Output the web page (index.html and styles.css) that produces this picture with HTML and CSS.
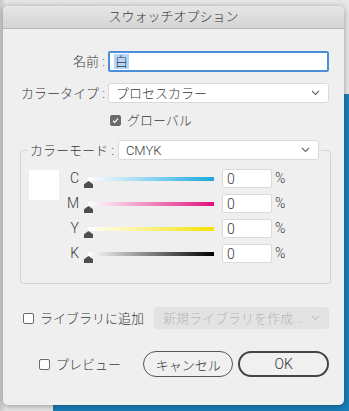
FILE: index.html
```html
<!DOCTYPE html>
<html lang="ja">
<head>
    <meta charset="UTF-8">
    <meta name="viewport" content="width=device-width, initial-scale=1.0">
    <title>スウォッチオプション</title>
    <link rel="stylesheet" href="styles.css">
</head>
<body>
    <div class="desktop">
        <!-- window behind the dialog -->
        <div class="back-window"></div>

        <div class="dialog">
            <div class="title-bar">スウォッチオプション</div>

            <div class="dialog-body">
                <div class="form-row">
                    <label class="row-label" for="swatchName">名前 :</label>
                    <div class="text-field focused" id="swatchName"><span class="selected-text">白</span></div>
                </div>

                <div class="form-row row-type">
                    <label class="row-label">カラータイプ :</label>
                    <div class="select-box">
                        <span>プロセスカラー</span>
                        <svg class="chevron" width="9" height="6" viewBox="0 0 9 6"><polyline points="1,1 4.5,4.5 8,1" fill="none" stroke="#666" stroke-width="1.1"/></svg>
                    </div>
                </div>

                <div class="check-row global-row">
                    <span class="checkbox checked">
                        <svg width="11" height="11" viewBox="0 0 11 11"><polyline points="2.5,5.7 4.6,7.8 8.6,3.2" fill="none" stroke="#fff" stroke-width="1.6"/></svg>
                    </span>
                    <span>グローバル</span>
                </div>

                <fieldset class="color-group">
                    <legend class="group-legend">
                        <span class="legend-label">カラーモード :</span>
                        <span class="select-box mode-select">
                            <span>CMYK</span>
                            <svg class="chevron" width="9" height="6" viewBox="0 0 9 6"><polyline points="1,1 4.5,4.5 8,1" fill="none" stroke="#666" stroke-width="1.1"/></svg>
                        </span>
                    </legend>

                    <div class="mixer">
                        <div class="swatch"></div>
                        <div class="channels">
                            <div class="channel">
                                <span class="channel-name">C</span>
                                <div class="slider"><div class="track track-c"></div><div class="thumb"></div></div>
                                <div class="num-field">0</div>
                                <span class="unit">%</span>
                            </div>
                            <div class="channel">
                                <span class="channel-name">M</span>
                                <div class="slider"><div class="track track-m"></div><div class="thumb"></div></div>
                                <div class="num-field">0</div>
                                <span class="unit">%</span>
                            </div>
                            <div class="channel">
                                <span class="channel-name">Y</span>
                                <div class="slider"><div class="track track-y"></div><div class="thumb"></div></div>
                                <div class="num-field">0</div>
                                <span class="unit">%</span>
                            </div>
                            <div class="channel">
                                <span class="channel-name">K</span>
                                <div class="slider"><div class="track track-k"></div><div class="thumb"></div></div>
                                <div class="num-field">0</div>
                                <span class="unit">%</span>
                            </div>
                        </div>
                    </div>
                </fieldset>

                <div class="library-row">
                    <div class="check-row">
                        <span class="checkbox"></span>
                        <span>ライブラリに追加</span>
                    </div>
                    <div class="select-box disabled">
                        <span>新規ライブラリを作成...</span>
                        <svg class="chevron" width="9" height="6" viewBox="0 0 9 6"><polyline points="1,1 4.5,4.5 8,1" fill="none" stroke="#c4c4c4" stroke-width="1.1"/></svg>
                    </div>
                </div>

                <div class="button-row">
                    <div class="check-row preview">
                        <span class="checkbox"></span>
                        <span>プレビュー</span>
                    </div>
                    <button type="button" class="btn">キャンセル</button>
                    <button type="button" class="btn btn-default">OK</button>
                </div>
            </div>
        </div>
    </div>
</body>
</html>
```

FILE: styles.css
```css
body {
    margin: 0;
    font-family: Roboto, 'Noto Sans CJK JP', sans-serif;
    font-size: 13px;
    font-weight: 300;
    line-height: 17px;
    color: #3a3a3a;
    background-color: #e4e4e4;
}

.desktop {
    position: relative;
    width: 349px;
    height: 411px;
    overflow: hidden;
    background: linear-gradient(90deg, #c9c9c9 0, #e6e6e6 6px, #e8e8e8 100%);
}

.back-window {
    position: absolute;
    left: 53px;
    top: 94px;
    right: 0;
    bottom: 0;
    background-color: #1b7db9;
}

.dialog {
    position: relative;
    margin: 6px 0 0 3px;
    width: 341px;
    height: 399px;
    background-color: #efefef;
    border-radius: 5px;
    box-shadow: 0 1px 6px rgba(0, 0, 0, 0.35);
    overflow: hidden;
}

.title-bar {
    height: 22px;
    line-height: 22px;
    text-align: center;
    font-size: 13px;
    color: #3a3a3a;
    background: linear-gradient(#e6e6e6, #d4d4d4);
    border-bottom: 1px solid #b9b9b9;
}

.dialog-body {
    padding: 22px 15px 0 17px;
}

.form-row {
    display: flex;
    align-items: center;
}

.row-label {
    width: 85px;
    text-align: right;
    margin-right: 3px;
    white-space: nowrap;
}

.text-field {
    flex: 1;
    height: 17px;
    line-height: 17px;
    padding: 0 5px;
    background-color: #fff;
    border: 1px solid #c9c9c9;
}

.text-field.focused {
    border: 2px solid #4a8fd8;
    border-radius: 2px;
    height: 17px;
    padding: 0 4px;
}

.selected-text {
    background-color: #b4d5fc;
    padding: 0 1px;
}

.row-type {
    margin-top: 11px;
}

.select-box {
    flex: 1;
    display: flex;
    align-items: center;
    justify-content: space-between;
    height: 18px;
    padding: 0 8px 0 7px;
    background-color: #fff;
    border: 1px solid #d9d9d9;
    border-radius: 3px;
}

.chevron {
    display: block;
}

.check-row {
    display: flex;
    align-items: center;
    white-space: nowrap;
}

.checkbox {
    display: inline-flex;
    align-items: center;
    justify-content: center;
    width: 11px;
    height: 11px;
    margin-right: 6px;
    border: 1px solid #6a6a6a;
    border-radius: 2px;
    background-color: #fff;
    box-sizing: border-box;
}

.checkbox.checked {
    background-color: #6b6b6b;
    border-color: #6b6b6b;
}

.global-row {
    margin: 9px 0 0 90px;
}

.color-group {
    margin: 11px 0 0 0;
    padding: 9px 9px 20px 8px;
    border: 1px solid #d4d4d4;
    border-radius: 3px;
}

.group-legend {
    display: flex;
    align-items: center;
    padding: 0 2px;
    margin-left: -1px;
}

.legend-label {
    margin-right: 4px;
    white-space: nowrap;
}

.mode-select {
    width: 184px;
    flex: none;
}

.mixer {
    display: flex;
    align-items: flex-start;
}

.swatch {
    width: 30px;
    height: 30px;
    background-color: #fff;
    margin-top: 1px;
}

.channels {
    margin-left: 6px;
}

.channel {
    display: flex;
    align-items: center;
    height: 19px;
    margin-bottom: 6px;
    font-size: 14px;
}

.channel:last-child {
    margin-bottom: 0;
}

.channel-name {
    width: 14px;
    text-align: right;
}

.slider {
    position: relative;
    width: 130px;
    height: 19px;
    margin-left: 5px;
}

.track {
    position: absolute;
    left: 4px;
    right: 0;
    top: 8px;
    height: 4px;
}

.track-c { background: linear-gradient(90deg, #fff, #19a8df); }
.track-m { background: linear-gradient(90deg, #fff, #e0117e); }
.track-y { background: linear-gradient(90deg, #fff, #f4e200); }
.track-k { background: linear-gradient(90deg, #fff, #000); }

.thumb {
    position: absolute;
    left: 0;
    top: 12px;
    width: 9px;
    height: 7px;
    background-color: #4e4e4e;
    clip-path: polygon(50% 0, 100% 45%, 100% 100%, 0 100%, 0 45%);
}

.num-field {
    height: 19px;
    line-height: 19px;
    margin-left: 8px;
    padding: 0 4px;
    background-color: #fff;
    border: 1px solid #dadada;
    border-radius: 2px;
    box-sizing: border-box;
    width: 50px;
}

.unit {
    margin-left: 3px;
}

.library-row {
    display: flex;
    align-items: center;
    margin-top: 23px;
    margin-left: 3px;
}

.library-row .select-box {
    margin-left: 10px;
    height: 20px;
    padding: 0 8px 0 8px;
    background-color: #e3e3e3;
    border-color: #e3e3e3;
    color: #b5b5b5;
}

.button-row {
    display: flex;
    align-items: center;
    margin-top: 22px;
}

.preview {
    margin-left: 19px;
    margin-right: 22px;
}

.btn {
    height: 26px;
    width: 92px;
    padding: 0;
    font-family: inherit;
    font-size: 13px;
    font-weight: 300;
    color: #333;
    background-color: #f0f0f0;
    border: 1px solid #555;
    border-radius: 13px;
}

.btn-default {
    margin-left: 5px;
    border: 2px solid #444;
    font-size: 14px;
}
```
